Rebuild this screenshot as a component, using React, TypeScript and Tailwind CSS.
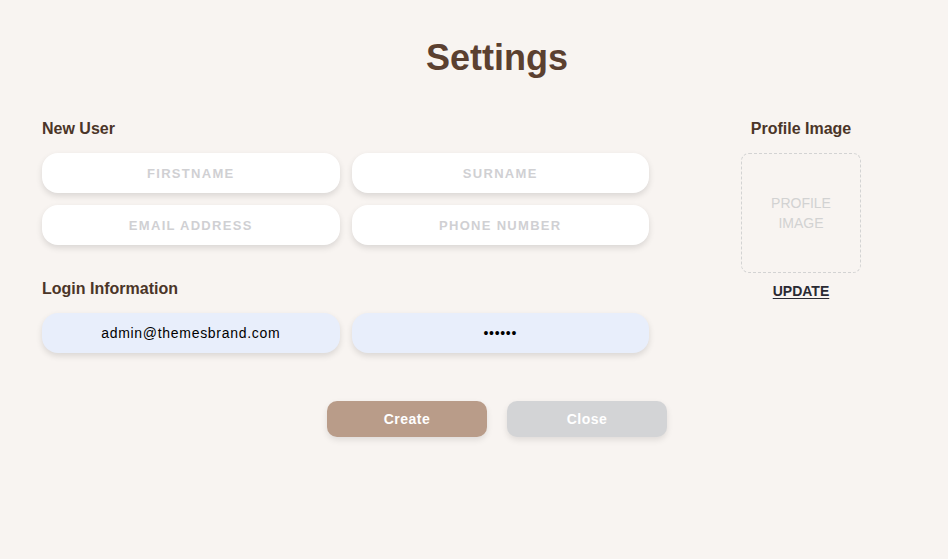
import { useState } from "react";

const fieldClass =
  "h-10 w-full rounded-2xl bg-white text-center text-[13px] font-bold tracking-[0.1em] text-gray-800 shadow-[0_3px_6px_rgba(0,0,0,0.12)] outline-none placeholder:text-[#d0d0d3]";

const loginClass =
  "h-10 w-full rounded-2xl bg-[#e8eefb] text-center text-[14px] tracking-[0.7px] text-black shadow-[0_3px_6px_rgba(0,0,0,0.12)] outline-none";

const App = () => {
  const [email, setEmail] = useState("admin@themesbrand.com");
  const [password, setPassword] = useState("123456");

  return (
    <div className="min-h-[559px] w-full bg-[#f8f4f1] font-['Liberation_Sans',Arial,sans-serif]">
      <div className="pt-[38px] pl-[46px] text-center">
        <h1 className="text-[36px] leading-10 font-bold text-[#5b4030]">
          Settings
        </h1>
      </div>

      <div className="mt-[39px] flex pl-[42px]">
        {/* Form */}
        <div className="w-[607px]">
          <h2 className="mb-[12px] text-base leading-6 font-bold text-[#4b3528]">
            New User
          </h2>
          <div className="grid grid-cols-2 gap-3">
            <input className={fieldClass} placeholder="FIRSTNAME" />
            <input className={fieldClass} placeholder="SURNAME" />
            <input className={fieldClass} placeholder="EMAIL ADDRESS" />
            <input className={fieldClass} placeholder="PHONE NUMBER" />
          </div>

          <h2 className="mt-[32px] mb-[12px] text-base leading-6 font-bold text-[#4b3528]">
            Login Information
          </h2>
          <div className="grid grid-cols-2 gap-3">
            <input
              className={loginClass}
              value={email}
              onChange={(e) => setEmail(e.target.value)}
            />
            <input
              type="password"
              className={loginClass}
              value={password}
              onChange={(e) => setPassword(e.target.value)}
            />
          </div>
        </div>

        {/* Profile image */}
        <div className="ml-[92px] flex w-[120px] flex-col items-center">
          <h2 className="mb-[12px] text-base leading-6 font-bold whitespace-nowrap text-[#4b3528]">
            Profile Image
          </h2>
          <div className="flex h-[120px] w-[120px] items-center justify-center rounded-lg border border-dashed border-[#d3d3d3] text-center text-[14px] leading-5 text-[#d2d2d2]">
            PROFILE
            <br />
            IMAGE
          </div>
          <button
            type="button"
            className="mt-[8px] text-[14px] leading-5 font-bold text-[#2a2a33] underline underline-offset-2"
          >
            UPDATE
          </button>
        </div>
      </div>

      <div className="mt-12 flex justify-center gap-5 pl-[46px]">
        <button
          type="button"
          className="h-9 w-40 rounded-[10px] bg-[#b99c89] text-[14px] font-bold tracking-[0.5px] text-white shadow-[0_3px_6px_rgba(0,0,0,0.1)]"
        >
          Create
        </button>
        <button
          type="button"
          className="h-9 w-40 rounded-[10px] bg-[#d3d4d6] text-[14px] font-bold tracking-[0.5px] text-white shadow-[0_3px_6px_rgba(0,0,0,0.1)]"
        >
          Close
        </button>
      </div>
    </div>
  );
};

export default App;
